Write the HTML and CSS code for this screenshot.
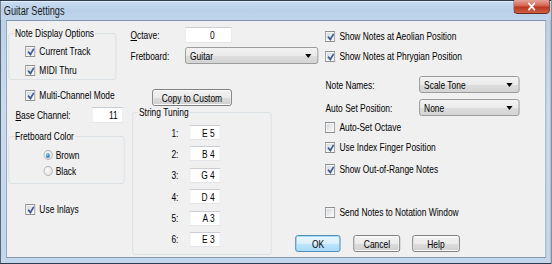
FILE: index.html
```html
<!DOCTYPE html>
<html lang="en">
<head>
  <meta charset="UTF-8">
  <title>Guitar Settings</title>
  <link rel="stylesheet" href="styles.css">
</head>
<body>
  <div class="screen">
  <!-- dialog is laid out at full width, then squeezed horizontally like the original capture -->
  <div class="window">
    <div class="titlebar">
      <span class="title">Guitar Settings</span>
      <span class="close-btn">
        <svg width="14" height="9" viewBox="0 0 14 9"><path d="M3.5 1.5l7 6M10.5 1.5l-7 6" stroke="#fff" stroke-width="2.2" stroke-linecap="round"/></svg>
      </span>
    </div>
    <div class="frame">
      <div class="client">

        <!-- left column -->
        <div class="col col-left">
          <fieldset class="group group-notes">
            <legend>Note Display Options</legend>
            <div class="check-row in-group"><span class="cb on"></span>Current Track</div>
            <div class="check-row in-group gap1"><span class="cb on"></span>MIDI Thru</div>
          </fieldset>

          <div class="check-row indent multi"><span class="cb on"></span>Multi-Channel Mode</div>

          <div class="field-row base">
            <label><u>B</u>ase Channel:</label>
            <div class="textbox w-base">11</div>
          </div>

          <fieldset class="group group-color">
            <legend>Fretboard Color</legend>
            <div class="radio-row"><span class="rb on"></span>Brown</div>
            <div class="radio-row"><span class="rb"></span>Black</div>
          </fieldset>

          <div class="check-row indent inlays"><span class="cb on"></span>Use Inlays</div>
        </div>

        <!-- middle column -->
        <div class="col col-mid">
          <div class="field-row octave">
            <label class="lbl-mid"><u>O</u>ctave:</label>
            <div class="textbox w-octave">0</div>
          </div>
          <div class="field-row fretboard">
            <label class="lbl-mid">Fretboard:</label>
            <div class="combo w-fret">Guitar<span class="arrow"></span></div>
          </div>

          <button class="btn copy">Copy to Custom</button>

          <fieldset class="group group-tuning">
            <legend>String Tuning</legend>
            <div class="tuning">
              <div class="tune-row"><span class="num">1:</span><div class="textbox w-note">E 5</div></div>
              <div class="tune-row"><span class="num">2:</span><div class="textbox w-note">B 4</div></div>
              <div class="tune-row"><span class="num">3:</span><div class="textbox w-note">G 4</div></div>
              <div class="tune-row"><span class="num">4:</span><div class="textbox w-note">D 4</div></div>
              <div class="tune-row"><span class="num">5:</span><div class="textbox w-note">A 3</div></div>
              <div class="tune-row"><span class="num">6:</span><div class="textbox w-note">E 3</div></div>
            </div>
          </fieldset>
        </div>

        <!-- right column -->
        <div class="col col-right">
          <div class="check-row aeolian"><span class="cb on"></span>Show Notes at Aeolian Position</div>
          <div class="check-row phrygian"><span class="cb on"></span>Show Notes at Phrygian Position</div>

          <div class="field-row names">
            <label class="lbl-right">Note Names:</label>
            <div class="combo w-right">Scale Tone<span class="arrow"></span></div>
          </div>
          <div class="field-row autopos">
            <label class="lbl-right">Auto Set Position:</label>
            <div class="combo w-right">None<span class="arrow"></span></div>
          </div>

          <div class="check-row mt2"><span class="cb"></span>Auto-Set Octave</div>
          <div class="check-row mt2"><span class="cb on"></span>Use Index Finger Position</div>
          <div class="check-row mt4"><span class="cb on"></span>Show Out-of-Range Notes</div>
          <div class="check-row notation"><span class="cb"></span>Send Notes to Notation Window</div>

          <div class="buttons">
            <button class="btn default w-ok">OK</button>
            <button class="btn w-cancel">Cancel</button>
            <button class="btn w-help">Help</button>
          </div>
        </div>

      </div>
    </div>
  </div>
  </div>
</body>
</html>
```

FILE: styles.css
```css
body {
  margin: 0;
  overflow: hidden;
  background: #fff;
  font-family: "Liberation Sans", Arial, sans-serif;
  font-size: 11px;
  color: #000;
}
.screen {
  width: 552px;
  height: 264px;
  overflow: hidden;
}
.window {
  width: 721.4px;
  height: 264px;
  box-sizing: border-box;
  border: 1px solid #2c3b4e;
  border-left-width: 1.3px;
  border-right-width: 1.3px;
  background: linear-gradient(180deg, #b8cfe8 0%, #c9dbef 40%, #c3d6ec 100%);
  display: flex;
  flex-direction: column;
  transform: scaleX(0.765);
  transform-origin: 0 0;
}
.titlebar {
  height: 19px;
  flex: none;
  position: relative;
  background: linear-gradient(180deg, #c9dcf1 0%, #b9d0e9 50%, #c0d5ec 100%);
  box-shadow: inset 0 1px 0 #e4eef9;
}
.title {
  display: block;
  padding: 3px 0 0 4px;
  font-size: 12px;
  color: #1b1b1b;
}
.close-btn {
  position: absolute;
  top: -1px;
  right: 1.3px;
  width: 48.4px;
  height: 14px;
  box-sizing: border-box;
  border: 1px solid #6a2a22;
  border-top: none;
  border-radius: 0 0 5px 5px;
  background: linear-gradient(180deg, #e6a496 0%, #d4644f 45%, #bb3522 55%, #cf6040 100%);
  display: flex;
  align-items: center;
  justify-content: center;
}
.frame {
  flex: 1;
  padding: 0 6.5px 5px 6.5px;
  display: flex;
}
.client {
  flex: 1;
  border: 1px solid #8296ad;
  border-left-width: 1.3px;
  border-right-width: 1.3px;
  background: #f0f0f0;
  display: flex;
}
.col {
  display: flex;
  flex-direction: column;
  align-items: flex-start;
}
.col-left {
  width: 158.2px;
  padding-left: 2.6px;
}
.col-mid {
  width: 256.2px;
}
.col-right {
  flex: 1;
}

/* group boxes */
.group {
  margin: 0;
  padding: 2px 6.5px 0 6.5px;
  border: 1px solid #d7dfe4;
  border-radius: 3px;
  box-sizing: border-box;
  min-width: 0;
}
.group legend {
  padding: 0 1px;
  line-height: 13px;
  white-space: nowrap;
}
.group-notes {
  width: 141.2px;
  margin-top: 6px;
}
.group-color {
  width: 151.6px;
  margin-top: 7px;
  padding-top: 4px;
  padding-bottom: 4px;
}
.group-tuning {
  width: 181.7px;
  height: 149px;
  margin-left: 3.9px;
  padding-top: 6px;
}

/* checkboxes */
.check-row {
  height: 18px;
  display: flex;
  align-items: center;
  white-space: nowrap;
}
.check-row.in-group {
  margin-left: 14.7px;
}
.check-row.gap1 {
  margin-top: 1px;
}
.check-row.indent {
  padding-left: 22.2px;
}
.multi {
  margin-top: 6px;
}
.inlays {
  margin-top: 16px;
}
.cb {
  width: 13px;
  height: 11px;
  box-sizing: border-box;
  margin-right: 5.2px;
  border: 1px solid #8e8f8f;
  border-left-width: 1.3px;
  border-right-width: 1.3px;
  background: linear-gradient(135deg, #d0d3d6 0%, #e9ebee 50%, #fbfbfb 100%);
  box-shadow: inset 0 0 0 1px #f6f6f6;
  flex: none;
  position: relative;
}
.cb.on::after {
  content: "";
  position: absolute;
  left: 3.5px;
  top: 0;
  width: 3px;
  height: 6px;
  border-right: 2.4px solid #3f5c94;
  border-bottom: 2px solid #3f5c94;
  transform: rotate(38deg);
}

/* radios */
.radio-row {
  height: 16px;
  display: flex;
  align-items: center;
  margin-left: 38.2px;
}
.rb {
  width: 12px;
  height: 10px;
  box-sizing: border-box;
  border-radius: 50%;
  border: 1px solid #b3b3b3;
  background: radial-gradient(circle at 40% 40%, #fefefe, #d6d6d6);
  margin-right: 4px;
  position: relative;
}
.rb.on::after {
  content: "";
  position: absolute;
  left: 2.5px;
  top: 1.5px;
  width: 5px;
  height: 5px;
  border-radius: 50%;
  background: radial-gradient(circle at 40% 35%, #8ad0f0, #1d6fa3 70%, #12507a);
}

/* fields */
.field-row {
  display: flex;
  align-items: center;
  white-space: nowrap;
}
.field-row label {
  flex: none;
}
.base {
  width: 150.3px;
  height: 16px;
  margin-top: 3px;
  padding-left: 9.15px;
  box-sizing: border-box;
  justify-content: space-between;
}
.octave {
  height: 16px;
  margin-top: 6px;
}
.fretboard {
  height: 17px;
  margin-top: 4px;
}
.lbl-mid {
  width: 73.2px;
  padding-left: 1.3px;
  box-sizing: border-box;
}
.lbl-right {
  width: 122.9px;
}
.names {
  height: 17px;
  margin-top: 11px;
}
.autopos {
  height: 17px;
  margin-top: 6px;
}
.textbox {
  height: 100%;
  box-sizing: border-box;
  background: #fff;
  border: 1px solid #e2e6ea;
  border-top-color: #c9ced4;
  padding-right: 6.5px;
  display: flex;
  align-items: center;
  justify-content: flex-end;
}
.w-base { width: 41.8px; }
.w-octave { width: 60.1px; padding-right: 21px; }
.w-note { width: 40.5px; height: 15px; }
.combo {
  height: 100%;
  box-sizing: border-box;
  border: 1px solid #8e8f8f;
  border-left-width: 1.3px;
  border-right-width: 1.3px;
  border-radius: 3px;
  background: linear-gradient(180deg, #f3f3f3 0%, #ebebeb 50%, #dddddd 51%, #d4d4d4 100%);
  padding-left: 5px;
  display: flex;
  align-items: center;
  position: relative;
}
.combo .arrow {
  position: absolute;
  right: 8px;
  top: 6px;
  border-left: 4px solid transparent;
  border-right: 4px solid transparent;
  border-top: 4px solid #000;
}
.w-fret { width: 173.9px; }
.w-right { width: 130.7px; }

.mt2 { margin-top: 2px; }
.mt4 { margin-top: 4px; }
.aeolian { margin-top: 6px; }
.phrygian { margin-top: 2px; }
.notation { margin-top: 25px; }

/* string tuning */
.tuning {
  display: flex;
  flex-direction: column;
  gap: 6.4px;
}
.tune-row {
  display: flex;
  align-items: center;
  height: 15px;
}
.num {
  width: 52.6px;
  text-align: right;
}
.tune-row .textbox {
  margin-left: 14.4px;
}

/* buttons */
.btn {
  font-family: inherit;
  font-size: 11px;
  color: #000;
  height: 17px;
  padding: 0;
  border: 1px solid #707070;
  border-left-width: 1.3px;
  border-right-width: 1.3px;
  border-radius: 3px;
  background: linear-gradient(180deg, #f2f2f2 0%, #ebebeb 50%, #dddddd 51%, #cfcfcf 100%);
  box-shadow: inset 0 0 0 1px #fcfcfc;
  white-space: nowrap;
}
.copy {
  width: 103.3px;
  margin-top: 25px;
  margin-left: 30px;
}
.buttons {
  display: flex;
  margin-top: 14px;
  margin-left: -39.2px;
}
.btn.default {
  border-color: #3c7fb1;
  box-shadow: inset 0 0 0 1px #a6dcf7;
  background: linear-gradient(180deg, #eaf6fd 0%, #d9f0fc 50%, #bee6fd 51%, #a7d9f5 100%);
}
.w-ok { width: 58.8px; }
.w-cancel { width: 61.4px; margin-left: 17px; }
.w-help { width: 61.4px; margin-left: 15.7px; }
```
